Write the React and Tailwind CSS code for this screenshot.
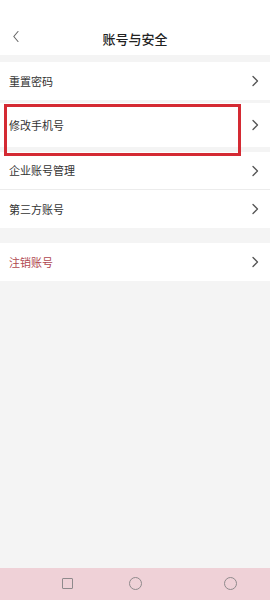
import React from "react";

const font = { fontFamily: '"Noto Sans CJK SC", "Noto Sans", sans-serif' };

function Chevron() {
  return (
    <svg width="8" height="12" viewBox="0 0 8 12" className="shrink-0">
      <path d="M2 1.5 L6.5 6 L2 10.5" fill="none" stroke="#555" strokeWidth="1.3" strokeLinecap="round" strokeLinejoin="round" />
    </svg>
  );
}

function Row({ label, h, red, border }) {
  return (
    <div className={`flex items-center justify-between bg-white pl-[9px] pr-[11px] ${h} ${border ? "border-b border-[#ececec]" : ""}`}>
      <span className={`text-[11px] leading-none ${red ? "text-[#b0474f]" : "text-[#333]"}`}>{label}</span>
      <Chevron />
    </div>
  );
}

export default function App() {
  return (
    <div className="w-[270px] h-[600px] bg-[#f4f4f4] flex flex-col overflow-hidden" style={font}>
      <div className="h-[55px] bg-white flex items-end pb-[10px] relative">
        <div className="absolute left-[12px] bottom-[12px]">
          <svg width="8" height="13" viewBox="0 0 8 13">
            <path d="M6 1.5 L1.8 6.5 L6 11.5" fill="none" stroke="#666" strokeWidth="1.1" strokeLinecap="round" strokeLinejoin="round" />
          </svg>
        </div>
        <div className="w-full text-center text-[13px] font-medium text-[#222] leading-none">账号与安全</div>
      </div>
      <div className="h-[7px]" />
      <Row label="重置密码" h="h-[38px]" />
      <div className="h-[3px]" />
      <div className="relative">
        <Row label="修改手机号" h="h-[44px]" />
        <div className="absolute left-[4px] top-[1px] w-[237px] h-[52px] border-[3px] border-[#d42a33]" />
      </div>
      <div className="h-[5px]" />
      <Row label="企业账号管理" h="h-[38px]" border />
      <Row label="第三方账号" h="h-[38px]" />
      <div className="h-[15px]" />
      <Row label="注销账号" h="h-[38px]" red />
      <div className="flex-1" />
      <div className="h-[32px] bg-[#efd1d7] flex items-center relative">
        <div className="absolute left-[62px] top-[10px] w-[11px] h-[11px] border-[1.3px] border-[#8f8a8c] rounded-[1px]" />
        <div className="absolute left-[129px] top-[9px] w-[13px] h-[13px] border-[1.3px] border-[#8f8a8c] rounded-full" />
        <div className="absolute left-[224px] top-[9px] w-[13px] h-[13px] border-[1.3px] border-[#8f8a8c] rounded-full" />
      </div>
    </div>
  );
}
